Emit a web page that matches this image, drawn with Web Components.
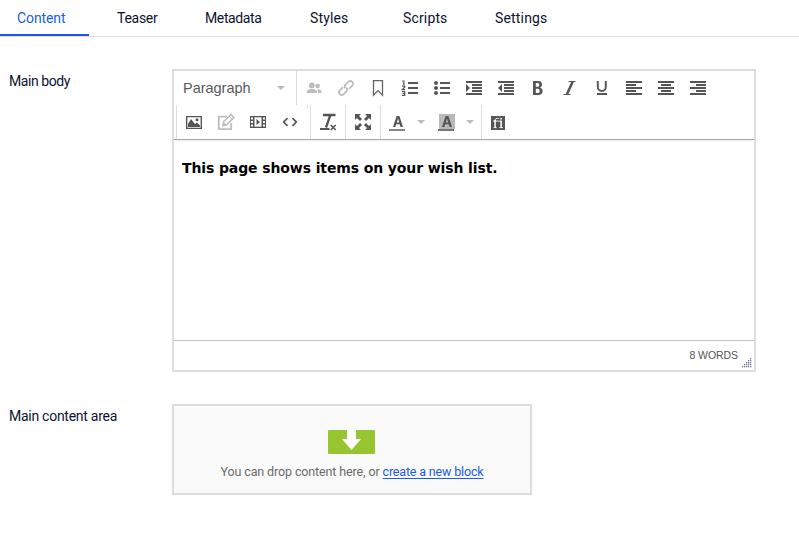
<!DOCTYPE html>
<html lang="en"><head><meta charset="utf-8"><title>Content editor</title>
<style>
body{margin:0;background:#fff;color:#0b1330;font-family:Roboto,sans-serif;width:799px;height:543px;overflow:hidden}
</style></head><body><cms-page></cms-page>
<script>
const define=(name,html,setup)=>customElements.define(name,class extends HTMLElement{
  connectedCallback(){
    if(this.shadowRoot)return;
    this.attachShadow({mode:'open'}).innerHTML=html;
    if(setup)setup(this,this.shadowRoot);
  }
});

// Single-line label whose tracking is adjusted to a given width.
define('fit-label',`<style>:host{display:inline-block;white-space:nowrap}span{display:inline-block}:host([link]) span{text-decoration:underline;text-decoration-thickness:1px;text-underline-offset:2px}</style><span><slot></slot></span>`,(el,r)=>{
  const s=r.querySelector('span'),n=el.textContent.length,w=+el.getAttribute('w');
  s.style.letterSpacing=((w-s.getBoundingClientRect().width)/n)+'px';
});

const g='#555',l='#bdbdbd';
const lines=a=>a.map(([x,y,w,h=2])=>`<rect x="${x}" y="${y}" width="${w}" height="${h}" fill="${g}"/>`).join('');
const icons={
 people:`<g fill="${l}"><circle cx="3.6" cy="-2" r="2.3"/><path d="M3 1.2c3 0 4.7 1.2 4.7 3V5H3.9V3.6C3.9 2.600 3.600 1.900 2.600 1.200z"/><circle cx="-2.200" cy="-2.600" r="2.900"/><path d="M-7.300 5V3.800C-7.300 1.800-4 1-2.200 1S3 1.800 3 3.800V5z"/></g>`,
 link:`<g transform="rotate(-45)" fill="none" stroke="${l}" stroke-width="1.700"><path d="M-1.500-2.700H-6a2.700 2.700 0 0 0 0 5.400H-2A2.700 2.700 0 0 0 .6 0"/><path d="M1.500 2.700H6a2.700 2.700 0 0 0 0-5.400H2A2.700 2.700 0 0 0-.6 0"/></g>`,
 bookmark:`<path d="M-4.500-7.400h9V7.200L0 2.600-4.500 7.200z" fill="none" stroke="#646464" stroke-width="1.300"/>`,
 ol:lines([[-2,-6,10],[-2,-1,10],[-2,4,10]])+`<g fill="none" stroke="${g}" stroke-width="1.200"><path d="M-7.800-7h1.700v4M-8-1.900h2.700v1.200l-2.400 2.300h2.700M-8 3.500h2.700v3.800H-8M-7.500 5.300h2"/></g>`,
 ul:lines([[-2,-6,10],[-2,-1,10],[-2,4,10]])+`<g fill="${g}"><circle cx="-6" cy="-5" r="2"/><circle cx="-6" r="2"/><circle cx="-6" cy="5" r="2"/></g>`,
 indent:lines([[-8,-7,16],[-2,-4,10],[-2,-1,10],[-2,2,10],[-8,5,16]])+`<path d="M-8-4l4 4-4 4z" fill="${g}"/>`,
 outdent:lines([[-8,-7,16],[-2,-4,10],[-2,-1,10],[-2,2,10],[-8,5,16]])+`<path d="M-4-4l-4 4 4 4z" fill="${g}"/>`,
 bold:`<path transform="translate(-1)" d="M-4-7H1C4-7 5-5.500 5-3.500 5-1.800 4.200-.8 2.900-.3 4.600 0 5.600 1.200 5.600 3 5.600 5.500 4 7 1 7h-5zM-1.200-5v3.800H.4c1.300 0 1.900-.7 1.900-1.900S1.700-5 .4-5zM-1.200.8V5H.6C2 5 2.700 4.200 2.700 2.900S2 .8.6.8z" fill="${g}" fill-rule="evenodd"/>`,
 italic:`<g transform="translate(-.5)"><path d="M-1-6.500h7M-6 6.500H1" fill="none" stroke="${g}" stroke-width="1.200"/><path d="M3.200-6.500L-2.600 6.500" stroke="${g}" stroke-width="2.500"/></g>`,
 underline:`<path d="M-4.200-7v6c0 2.500 1.600 4 4 4s4-1.500 4-4v-6" fill="none" stroke="${g}" stroke-width="1.900"/><rect x="-5" y="5" width="10" height="2" fill="${g}"/>`,
 left:lines([[-8,-7,16],[-8,-4,10],[-8,-1,16],[-8,2,10],[-8,5,16]]),
 center:lines([[-8,-7,16],[-5,-4,10],[-8,-1,16],[-5,2,10],[-8,5,16]]),
 right:lines([[-8,-7,16],[-2,-4,10],[-8,-1,16],[-2,2,10],[-8,5,16]]),
 image:`<path d="M-7.300-5.400H7.300V6.400H-7.300z" fill="none" stroke="${g}" stroke-width="1.400"/><path d="M-6 5V2l3-5L1 2l2-1.500L6 3.500V5z" fill="${g}"/><circle cx="3" cy="-2.200" r="1.500" fill="${g}"/>`,
 edit:`<path d="M1-5.300h-8.200V7.200H5.200V1" fill="none" stroke="${l}" stroke-width="1.800"/><path d="M-3.200 3.500l.8-3.700 7.400-7.400 3 3L.6 2.800z" fill="#fff" stroke="${l}" stroke-width="1.500"/><path d="M-3.200 3.500l1-3 2 2zM3.200-5.800l3 3" fill="${l}" stroke="${l}"/>`,
 media:`<path d="M-8-6H8V6H-8z" fill="${g}"/><path d="M-3.500-4.700h7v9.400h-7z" fill="#fff"/><path d="M-7-4.500h2v2h-2zm0 3.500h2v2h-2zm0 3.500h2v2h-2zM5-4.500h2v2H5zM5-1h2v2H5zm0 3.500h2v2H5z" fill="#fff"/><path d="M-1.500-3L2 0l-3.500 3z" fill="${g}"/>`,
 code:`<path d="M-2.500-3.900L-6.300 0l3.800 3.900M2.500-3.900L6.300 0 2.500 3.900" fill="none" stroke="${g}" stroke-width="1.700"/>`,
 clear:`<path d="M-5-7H7.500M2.200-6.500L-2 5.500" fill="none" stroke="${g}" stroke-width="2.300"/><path d="M-8 7H1.500" stroke="${g}" stroke-width="2"/><path d="M2.700 3l5 5M7.700 3l-5 5" fill="none" stroke="${g}" stroke-width="1.600"/>`,
 full:[0,90,180,270].map(a=>`<g transform="rotate(${a})"><path d="M-8-8h6l-2 2 3 3-2 2-3-3-2 2z" fill="${g}"/></g>`).join(''),
 color:`<path d="M-5 5L-1.400-6H1.400L5 5H2.600L1.700 2.300H-1.800L-2.700 5zM-1.200.4H1.200L0-3.500z" fill="${g}"/><rect x="-9" y="7" width="16" height="2" fill="#858585"/>`,
 back:`<rect x="-8" y="-8" width="16" height="15" fill="#b9b9b9"/><path d="M-5 5L-1.400-6H1.400L5 5H2.600L1.700 2.300H-1.800L-2.700 5zM-1.200.4H1.200L0-3.500z" fill="${g}"/><rect x="-9" y="7" width="16" height="2" fill="#777"/>`,
 fi:`<rect x="-7" y="-6" width="14" height="14" fill="${g}"/><path d="M-5-.9H3.500M-4.500 5.600h3.200M1.300 5.600h3.600M-3-.5v-1C-3-3.200-1.500-4 .8-3.500" fill="none" stroke="#fff" stroke-width=".9"/><path d="M-2.900 5.500V-2M3.100 5.500V-1.300" stroke="#fff" stroke-width="1.500"/><circle cx="3.100" cy="-3.200" r="1" fill="#fff"/>`,
 caret:`<path d="M-4-2H4L0 2z" fill="#b6bdc2"/>`
};
define('tool-icon',`<style>:host{display:block;width:32px;height:34px;flex:none}:host([name=caret]){width:14px}svg{display:block;width:100%;height:100%;overflow:visible}</style><svg></svg>`,(el,r)=>{
  const s=r.querySelector('svg'),c=el.getAttribute('name')==='caret';
  s.setAttribute('viewBox',c?'-7 -17 14 34':'-16 -17 32 34');s.innerHTML=icons[el.getAttribute('name')];
});
const set=s=>s.split(' ').map(n=>`<tool-icon name="${n}"></tool-icon>`).join('');

define('nav-tabs',`<style>
:host{display:grid;grid-template-columns:89px 88px 105px 93px 92px 100px;column-gap:0;height:36px;border-bottom:1px solid #ddd;font-size:14px;line-height:36px}
div{box-sizing:border-box;height:36px;padding-left:28px}
.on{padding-left:17px;color:#1a5be8;border-bottom:2px solid #1a56e8}
</style><div class="on"><fit-label w="48.500">Content</fit-label></div><div><fit-label w="40.500">Teaser</fit-label></div><div><fit-label w="56.500">Metadata</fit-label></div><div><fit-label w="38.500">Styles</fit-label></div><div><fit-label w="44.500">Scripts</fit-label></div><div><fit-label w="52.500">Settings</fit-label></div>`);

define('form-row',`<style>:host{display:flex;padding-left:9px}.l{width:163px;flex:none;font-size:14px;line-height:20px;padding-top:2px}</style><div class="l"><slot name="label"></slot></div><slot></slot>`);

define('editor-toolbar',`<style>
:host{display:block;height:68px;border-bottom:1px solid #a8a8a8;box-shadow:0 1px 1px #eee}
.row{display:flex;height:34px}
.format{box-sizing:border-box;width:123px;border-right:1px solid #ddd;display:flex;justify-content:space-between;padding:0 8px 0 9px;font:14.500px/34px "Liberation Sans",sans-serif;color:#5a5a5a}
.one{padding-left:1px;display:flex}
.row2{padding-left:2px}
.g{display:flex;border-left:1px solid #ddd;box-sizing:border-box;padding-left:1px}
.tick{width:1px;height:3px;background:#ddd}
</style>
<div class="row"><div class="format"><fit-label w="67.500">Paragraph</fit-label><tool-icon name="caret"></tool-icon></div><div class="one">${set('people link bookmark ol ul indent outdent bold italic underline left center right')}</div></div>
<div class="row row2"><div class="g" style="width:134px">${set('image edit media code')}<i class="tick" style="margin-left:1px"></i></div><div class="g" style="width:35px">${set('clear')}</div><div class="g" style="width:35px">${set('full')}</div><div class="g" style="width:101px">${set('color caret')}<span style="width:3px"></span>${set('back caret')}</div><div class="g" style="padding:0">${set('fi')}</div></div>`);

define('rich-editor',`<style>
:host{display:flex;flex-direction:column;box-sizing:border-box;width:584px;height:303px;border:2px solid #ddd}
.body{flex:1;padding:18px 8px;font:bold 14px/20px "DejaVu Sans",sans-serif;color:#000}
.status{height:30px;border-top:1px solid #c5c5c5;display:flex;justify-content:flex-end;font:10.500px/28px "Liberation Sans",sans-serif;color:#555;box-sizing:border-box}
svg{display:block;margin:17px 2px 0 4px;width:10px;height:10px;flex:none}
</style><editor-toolbar></editor-toolbar><div class="body"><fit-label w="315.500">This page shows items on your wish list.</fit-label></div><div class="status"><fit-label w="48.500">8 WORDS</fit-label><svg viewBox="0 0 10 10"></svg></div>`,(el,r)=>{
  let d='';for(let y=0;y<5;y++)for(let x=4-y;x<5;x++)d+=`<rect x="${x*2}" y="${y*2}" width="1.300" height="1.300" fill="#777b9b"/>`;
  r.querySelector('.status svg').innerHTML=d;
});

define('drop-area',`<style>
:host{display:flex;flex-direction:column;align-items:center;box-sizing:border-box;width:360px;height:91px;border:2px solid #ddd;background:#fafafa;padding-top:24px;font-size:12.500px;line-height:18px;color:#6a6a6a}
svg{display:block;width:47px;height:24px;margin-right:1px}
.msg{padding-top:9px;display:flex;gap:3px}
a{color:#1a5be8}
</style><svg viewBox="0 0 47 24"><rect width="47" height="24" rx="1" fill="#97c532"/><path d="M19 0h9v9h5l-9.500 11L14 9h5z" fill="#fff"/></svg><div class="msg"><fit-label w="159">You can drop content here, or</fit-label><a><fit-label link w="101">create a new block</fit-label></a></div>`);
define('cms-page',`<style>:host{display:block}.a{margin-top:32px}.b{margin-top:32px}</style>
<nav-tabs></nav-tabs>
<form-row class="a"><fit-label slot="label" w="61">Main body</fit-label><rich-editor></rich-editor></form-row>
<form-row class="b"><fit-label slot="label" w="108">Main content area</fit-label><drop-area></drop-area></form-row>`);
</script></body></html>
